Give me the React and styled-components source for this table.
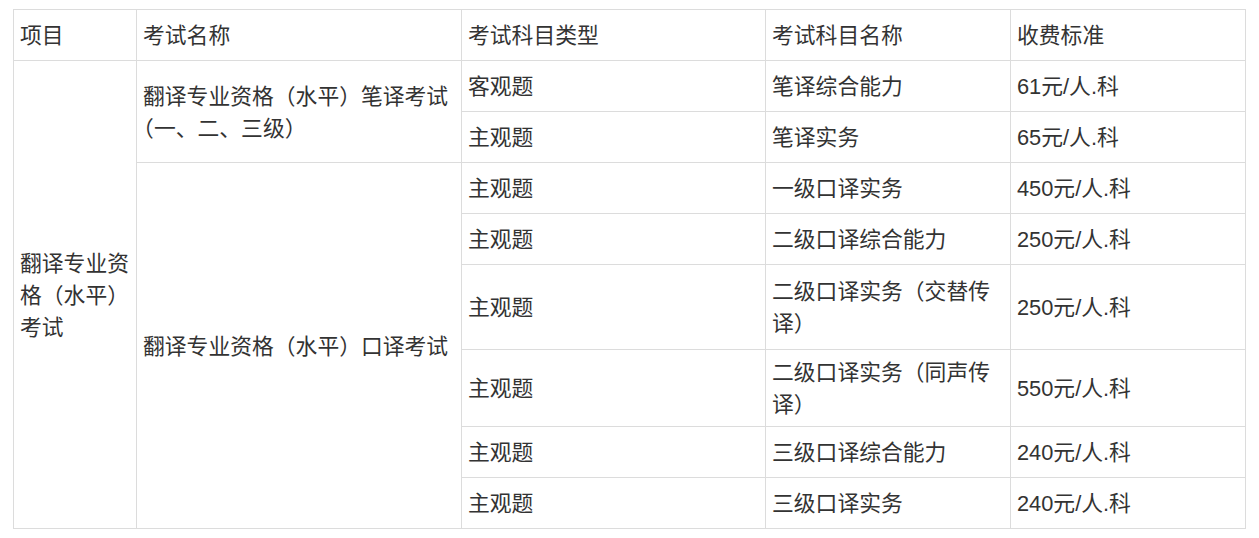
import React from "react";
import styled, { createGlobalStyle } from "styled-components";

const GlobalStyle = createGlobalStyle`
  body {
    margin: 0;
    background: #fff;
    font-family: "Liberation Sans", "Noto Sans CJK SC", sans-serif;
    color: #333;
  }
`;

const rows = [
  { type: "客观题", subject: "笔译综合能力", fee: "61元/人.科" },
  { type: "主观题", subject: "笔译实务", fee: "65元/人.科" },
  { type: "主观题", subject: "一级口译实务", fee: "450元/人.科" },
  { type: "主观题", subject: "二级口译综合能力", fee: "250元/人.科" },
  { type: "主观题", subject: "二级口译实务（交替传译）", fee: "250元/人.科" },
  { type: "主观题", subject: "二级口译实务（同声传译）", fee: "550元/人.科" },
  { type: "主观题", subject: "三级口译综合能力", fee: "240元/人.科" },
  { type: "主观题", subject: "三级口译实务", fee: "240元/人.科" },
];

function App() {
  return (
    <Page>
      <GlobalStyle />
      <Table>
        <Cell>项目</Cell>
        <Cell>考试名称</Cell>
        <Cell>考试科目类型</Cell>
        <Cell>考试科目名称</Cell>
        <Cell>收费标准</Cell>

        <Cell $col={1} $row="2 / span 8">翻译专业资格（水平）考试</Cell>
        <Cell $col={2} $row="2 / span 2">翻译专业资格（水平）笔译考试（一、二、三级）</Cell>
        <Cell $col={2} $row="4 / span 6">翻译专业资格（水平）口译考试</Cell>

        {rows.map((r, i) => (
          <React.Fragment key={i}>
            <Cell $col={3} $row={i + 2}>{r.type}</Cell>
            <Cell $col={4} $row={i + 2}>{r.subject}</Cell>
            <Cell $col={5} $row={i + 2}>{r.fee}</Cell>
          </React.Fragment>
        ))}
      </Table>
    </Page>
  );
}

const Page = styled.div`
  padding: 9px 0 0 13px;
`;

const Table = styled.div`
  display: grid;
  width: max-content;
  grid-template-columns: 123px 325px 304px 245px 235px;
  grid-template-rows: 51px 51px 51px 51px 51px 85px 77px 51px 51px;
  border-top: 1px solid #dcdcdc;
  border-left: 1px solid #dcdcdc;
`;

const Cell = styled.div`
  box-sizing: border-box;
  display: flex;
  align-items: center;
  padding: 2px 5px 0 6px;
  border-right: 1px solid #dcdcdc;
  border-bottom: 1px solid #dcdcdc;
  font-size: 21.8px;
  line-height: 32px;
  text-spacing-trim: trim-start;
  grid-column: ${(p) => p.$col || "auto"};
  grid-row: ${(p) => p.$row || "auto"};
`;

export default App;
